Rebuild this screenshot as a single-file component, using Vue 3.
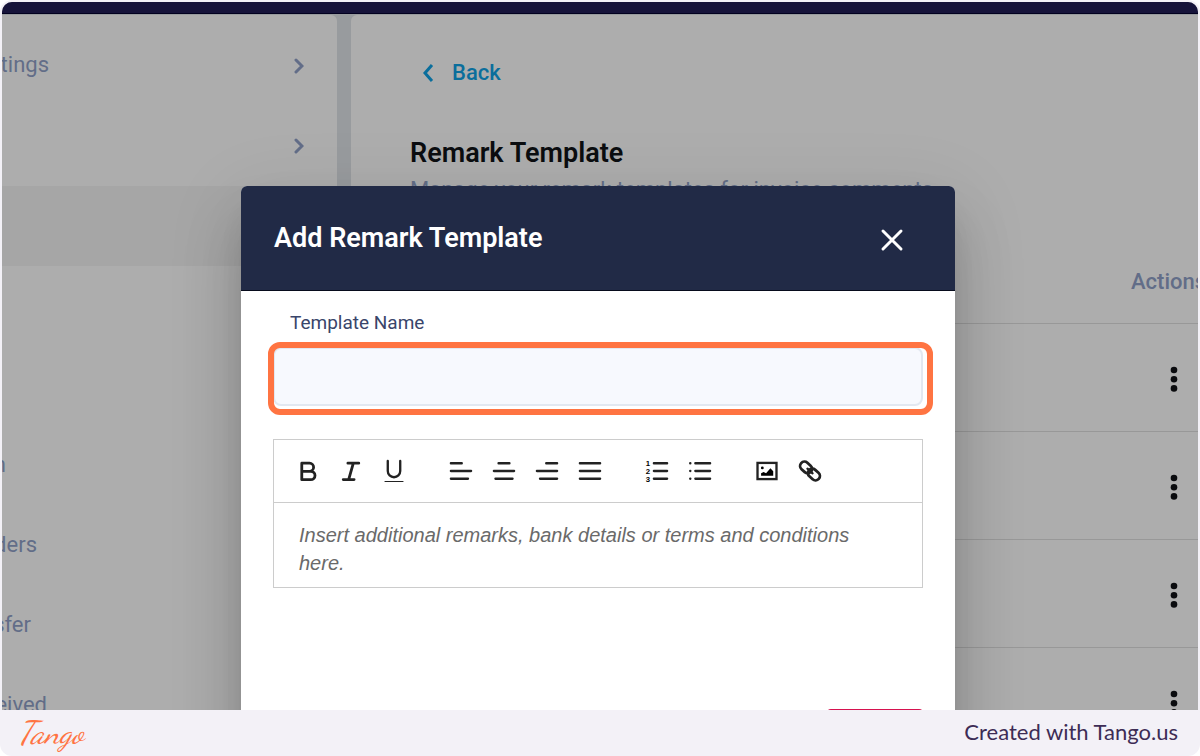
<script setup>
import { ref } from 'vue'

const menu = [
    { text: 'tings', end: 47, arrow: true },
    { text: '', end: 0, arrow: true },
    { text: '', end: 0, selected: true },
    { text: '', end: 0 },
    { text: '', end: 0 },
    { text: 'n', end: 4 },
    { text: 'ders', end: 35 },
    { text: 'sfer', end: 29 },
    { text: 'eived', end: 45 },
]

const rows = [1, 2, 3, 4]

const tools = [
    [
        { name: 'Bold', d: 'M5 4h5a2.6 2.6 0 0 1 0 5.2H5zM5 9.2h5.8a2.7 2.7 0 0 1 0 5.4H5z', heavy: true },
        { name: 'Italic', d: 'M7 4h7M4 14.5h7M10.5 4l-3 10.5', heavy: true },
        { name: 'Underline', d: 'M5 2.5v6.5a4 4 0 0 0 8 0V2.5', thin: 'M3.2 15.8h11.6' },
    ],
    [
        { name: 'Align left', d: 'M2.5 4h7M2.5 9h13M2.5 14h11' },
        { name: 'Align center', d: 'M5.5 4h7M2.5 9h13M3.5 14h11' },
        { name: 'Align right', d: 'M8.5 4h7M2.5 9h13M4.5 14h11' },
        { name: 'Justify', d: 'M2.5 4h13M2.5 9h13M2.5 14h13' },
    ],
    [
        { name: 'Ordered list', d: 'M7 4h8.5M7 9h8.5M7 14h8.5', numbers: true },
        { name: 'Bullet list', d: 'M6 4h9.5M6 9h9.5M6 14h9.5M2.7 4h.1M2.7 9h.1M2.7 14h.1' },
    ],
    [
        { name: 'Image', image: true },
        { name: 'Link', link: true },
    ],
]

const templateName = ref('')
const remark = ref('')
</script>

<template>
    <div class="frame">
        <div class="screen">
            <div class="topbar"></div>
            <div class="page">
                <!-- Settings menu -->
                <nav class="sidebar">
                    <a v-for="(item, i) in menu" :key="i" href="#" class="menu-item" :class="{ selected: item.selected }">
                        <span class="menu-label" :style="{ width: item.end + 'px' }">{{ item.text }}</span>
                        <svg v-if="item.arrow" class="arrow" viewBox="0 0 10 16">
                            <path d="M2 2l6 6-6 6" />
                        </svg>
                    </a>
                </nav>
                <!-- Remark list -->
                <main class="content">
                    <a href="#" class="back">
                        <svg class="arrow" viewBox="0 0 12 18">
                            <path d="M10 1L3 9l7 8" />
                        </svg>
                        Back
                    </a>
                    <h1>Remark Template</h1>
                    <p class="subtitle">Manage your remark templates for invoice comments</p>
                    <table class="remarks">
                        <thead>
                            <tr>
                                <td></td>
                                <th class="actions">Actions</th>
                            </tr>
                        </thead>
                        <tbody>
                            <tr v-for="row in rows" :key="row">
                                <td></td>
                                <td class="actions">
                                    <button class="dots" aria-label="Actions">
                                        <svg viewBox="0 0 8 28" width="8" height="28">
                                            <circle cx="4" cy="6" r="3.3" />
                                            <circle cx="4" cy="15.2" r="3.3" />
                                            <circle cx="4" cy="24.4" r="3.3" />
                                        </svg>
                                    </button>
                                </td>
                            </tr>
                        </tbody>
                    </table>
                </main>
            </div>
            <!-- Add remark dialog -->
            <div class="overlay">
                <div class="modal" role="dialog">
                    <header class="modal-header">
                        <h2>Add Remark Template</h2>
                        <button class="close" aria-label="Close">
                            <svg viewBox="0 0 24 24" width="24" height="24">
                                <path d="M3 3l18 18M21 3L3 21" />
                            </svg>
                        </button>
                    </header>
                    <form class="modal-body" @submit.prevent>
                        <label for="template-name">Template Name</label>
                        <div class="field">
                            <input id="template-name" v-model="templateName" type="text">
                        </div>
                        <div class="editor">
                            <div class="toolbar">
                                <div v-for="(group, g) in tools" :key="g" class="tool-group">
                                    <button v-for="tool in group" :key="tool.name" type="button" :aria-label="tool.name">
                                        <svg viewBox="0 0 18 18" width="28" height="28">
                                            <path v-if="tool.d" class="stroke" :class="{ heavy: tool.heavy }" :d="tool.d" />
                                            <path v-if="tool.thin" class="thin" :d="tool.thin" />
                                            <g v-if="tool.numbers" class="numbers">
                                                <text x="1.8" y="5.8">1</text>
                                                <text x="1.8" y="10.8">2</text>
                                                <text x="1.8" y="15.8">3</text>
                                            </g>
                                            <g v-if="tool.image">
                                                <rect class="stroke square" x="2.9" y="3.8" width="12.2" height="10.4" />
                                                <circle cx="6" cy="7" r="0.9" />
                                                <path d="M5.2 12V10.4l1.6-.7 1.6.7 2.8-3.2 1.8 2V12z" />
                                            </g>
                                            <g v-if="tool.link" transform="rotate(42 9 9)">
                                                <rect class="stroke heavy" x="1.4" y="6.2" width="8.4" height="5.6" rx="2.8" />
                                                <rect class="stroke heavy" x="8.2" y="6.2" width="8.4" height="5.6" rx="2.8" />
                                                <path class="stroke" d="M6.8 9h4.4" />
                                            </g>
                                        </svg>
                                    </button>
                                </div>
                            </div>
                            <textarea v-model="remark" rows="2" aria-label="Remark" placeholder="Insert additional remarks, bank details or terms and conditions here."></textarea>
                        </div>
                        <div class="buttons">
                            <button type="submit" class="save" aria-label="Save"></button>
                        </div>
                    </form>
                </div>
            </div>
        </div>
        <footer class="footer">
            <a href="#" class="logo">Tango</a>
            <span>Created with Tango.us</span>
        </footer>
    </div>
</template>

<style>
body {
    margin: 0;
    background: #fff;
}
</style>

<style scoped>
.frame {
    box-sizing: border-box;
    display: flex;
    flex-direction: column;
    height: 100vh;
    padding: 2px 2px 0;
    border-radius: 12px;
    background: #f3f1f7;
    font-family: Roboto, "Liberation Sans", sans-serif;
    font-size: 22px;
}

.screen {
    position: relative;
    flex: 1;
    min-height: 0;
    overflow: hidden;
    border-radius: 10px 10px 0 0;
    background: #989b9e;
}

.topbar {
    height: 11px;
    background: #16133a;
    border-bottom: 1px solid #02001f;
}

.page {
    display: flex;
    gap: 14px;
    padding-top: 1px;
}

.sidebar {
    box-sizing: border-box;
    width: 335px;
    padding: 11px 0 40px;
    border-radius: 0 6px 0 0;
    background: #adadad;
}

.menu-item {
    display: flex;
    align-items: center;
    justify-content: space-between;
    height: 80px;
    padding-right: 33px;
    color: #626d88;
    text-decoration: none;
}

.menu-item.selected {
    background: #a6a6a6;
}

.menu-label {
    display: flex;
    justify-content: flex-end;
    padding-bottom: 4px;
}

.arrow {
    width: 10px;
    height: 16px;
    fill: none;
    stroke: currentColor;
    stroke-width: 3;
    stroke-linecap: round;
}

.content {
    flex: 1;
    min-width: 0;
    padding: 42px 0 0 59px;
    border-radius: 6px 0 0 0;
    background: #adadad;
}

.back {
    display: flex;
    align-items: center;
    gap: 18px;
    padding-left: 12px;
    line-height: 32px;
    font-weight: 500;
    color: #0a6e9c;
    text-decoration: none;
}

.back .arrow {
    width: 12px;
    height: 18px;
    stroke-linecap: butt;
}

h1,
h2 {
    margin: 0;
    font-size: 27px;
    line-height: 32px;
    font-weight: 600;
}

h1 {
    margin-top: 48px;
    color: #0b0d10;
}

.subtitle {
    margin: 8px 0 0;
    line-height: 26px;
    color: #626d88;
}

.remarks {
    width: 100%;
    margin-top: 36px;
    table-layout: fixed;
    border-collapse: collapse;
}

.remarks td,
.remarks th {
    height: 107px;
    padding: 0;
    border-bottom: 1px solid #989898;
}

.remarks thead td,
.remarks thead th {
    height: 84px;
}

.remarks .actions {
    width: 67px;
    text-align: left;
    font-weight: 500;
    color: #626d88;
}

.dots {
    display: block;
    margin-left: 39px;
    padding: 0;
    border: 0;
    background: none;
}

.dots svg {
    display: block;
    fill: #0a0b0e;
}

.overlay {
    position: absolute;
    inset: 0;
    display: flex;
    justify-content: center;
    align-items: flex-start;
    padding: 184px 4px 0 0;
}

.modal {
    width: 714px;
    border-radius: 6px;
    background: #fff;
    box-shadow: 0 20px 30px -12px rgba(0, 0, 0, 0.14), 0 44px 60px 4px rgba(0, 0, 0, 0.14), 0 16px 76px 8px rgba(0, 0, 0, 0.08);
}

.modal-header {
    box-sizing: border-box;
    display: flex;
    align-items: center;
    justify-content: space-between;
    height: 105px;
    padding: 0 51px 0 33px;
    border-bottom: 1px solid #070b1c;
    border-radius: 6px 6px 0 0;
    background: #212a46;
    color: #fff;
}

.close {
    padding: 4px 0 0;
    border: 0;
    background: none;
}

.close svg {
    display: block;
    fill: none;
    stroke: #fff;
    stroke-width: 3;
    stroke-linecap: round;
}

.modal-body {
    padding: 16px 32px 32px;
}

.modal-body label {
    display: block;
    padding-left: 17px;
    font-size: 19px;
    line-height: 32px;
    color: #39456a;
}

.field {
    position: relative;
    margin-top: 8px;
    padding-bottom: 1px;
}

/* Highlight around the current step */
.field::after {
    content: "";
    position: absolute;
    inset: -5px -10px -8px -5px;
    border: 6px solid #ff7442;
    border-radius: 12px;
    pointer-events: none;
}

.field input {
    box-sizing: border-box;
    display: block;
    width: 100%;
    height: 59px;
    padding: 0 16px;
    border: 2px solid #e2e8f1;
    border-radius: 8px;
    background: #f7f9fe;
    font: inherit;
    outline: none;
}

.editor {
    margin-top: 32px;
    border: 1px solid #ccc;
}

.toolbar {
    display: flex;
    gap: 39px;
    padding: 16px 20px;
    height: 30px;
    border-bottom: 1px solid #ccc;
}

.tool-group {
    display: flex;
    gap: 15px;
}

.toolbar button {
    display: flex;
    align-items: center;
    padding: 0;
    border: 0;
    background: none;
}

.stroke,
.thin {
    fill: none;
    stroke: #222;
    stroke-width: 1.5;
    stroke-linecap: round;
    stroke-linejoin: round;
}

.heavy {
    stroke-width: 1.8;
}

.thin {
    stroke-width: 0.7;
}

.square {
    stroke-linejoin: miter;
}

.numbers {
    font-family: "Liberation Sans", sans-serif;
    font-size: 5px;
    font-weight: bold;
}

.editor textarea {
    box-sizing: border-box;
    display: block;
    width: 100%;
    height: 84px;
    padding: 18px 25px 8px;
    border: 0;
    outline: none;
    overflow: hidden;
    resize: none;
    background: none;
    font-family: "Liberation Sans", Arial, sans-serif;
    font-size: 20px;
    line-height: 28px;
}

.editor textarea::placeholder {
    color: #6a6a6a;
    font-style: italic;
}

.buttons {
    display: flex;
    justify-content: flex-end;
    margin-top: 121px;
}

.save {
    width: 96px;
    height: 60px;
    border: 0;
    border-radius: 4px;
    background: #d6124f;
}

.footer {
    display: flex;
    align-items: center;
    justify-content: space-between;
    height: 46px;
    padding: 0 20px 0 16px;
    font-family: Lato, sans-serif;
    line-height: 26px;
    color: #3d2c55;
}

.footer span {
    padding-bottom: 3px;
}

.logo {
    font-family: "Dancing Script", "Brush Script MT", Lato, cursive;
    font-size: 32px;
    font-style: italic;
    color: #ff7442;
    text-decoration: none;
}
</style>
